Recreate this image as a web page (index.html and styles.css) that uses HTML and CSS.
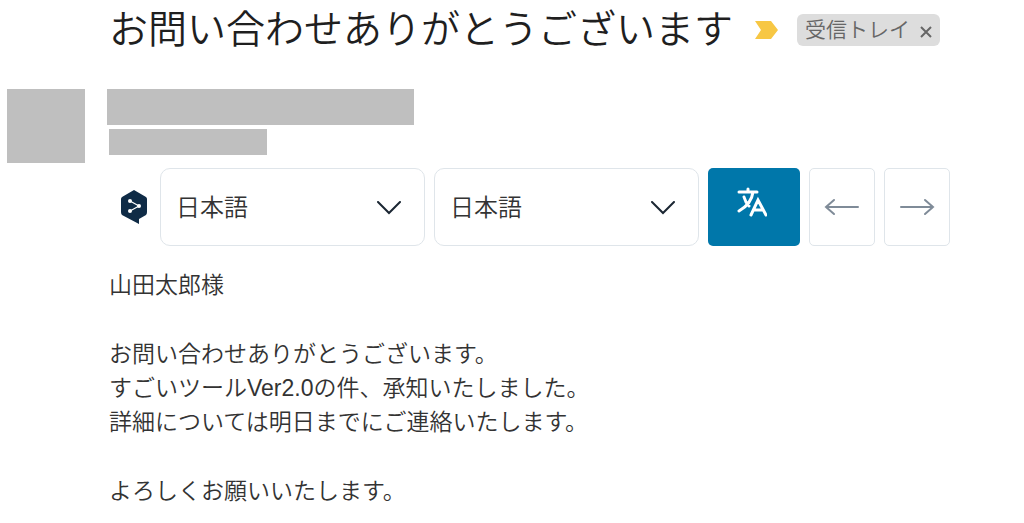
FILE: index.html
```
<!DOCTYPE html>
<html lang="ja">
	<head>
		<meta charset="utf-8">
		<title>お問い合わせありがとうございます</title>
		<link rel="stylesheet" href="styles.css">
	</head>
	<body>
		<header class="subject">
			<h1>お問い合わせありがとうございます</h1>
			<svg class="important" viewBox="0 0 24 20"><path d="M0 1H16L23 10L16 19H0L6 10Z" fill="#f7c744"/></svg>
			<span class="label">受信トレイ <button type="button" aria-label="ラベルを削除"><svg viewBox="0 0 12 12"><path d="M1 1L11 11M11 1L1 11"/></svg></button></span>
		</header>

		<main class="message">
			<div class="avatar"></div>
			<div class="content">
				<div class="sender"></div>
				<div class="recipient"></div>

				<div class="translator">
					<svg class="logo" viewBox="0 0 26 34">
						<path d="M13 0L25 7Q26 8 26 9V22Q26 24 25 25L18 29V34L1 25Q0 24 0 22V9Q0 8 1 7Z" fill="#0f2b46"/>
						<path d="M9 11L18 16L9 21" fill="none" stroke="#fff" stroke-width="1.200"/>
						<circle cx="9" cy="11" r="2" fill="#fff"/>
						<circle cx="18" cy="16" r="2" fill="#fff"/>
						<circle cx="9" cy="21" r="2" fill="#fff"/>
					</svg>
					<div class="language">
						<select aria-label="翻訳元の言語"><option>日本語</option></select>
						<svg viewBox="0 0 24 14"><path d="M1 1L12 12L23 1"/></svg>
					</div>
					<div class="language">
						<select aria-label="翻訳先の言語"><option>日本語</option></select>
						<svg viewBox="0 0 24 14"><path d="M1 1L12 12L23 1"/></svg>
					</div>
					<button type="button" class="translate" aria-label="翻訳">
						<svg viewBox="0 0 30 30"><path d="M2 5H20M11 2V5M16 5C15 13 9 20 2 24M7 10C8 14 9 16 12 19M14 28L21 13L29 28M17 23H26"/></svg>
					</button>
					<button type="button" class="arrow" aria-label="戻る">
						<svg viewBox="0 0 36 18"><path d="M34 9H2M10 2L2 9L10 16"/></svg>
					</button>
					<button type="button" class="arrow" aria-label="進む">
						<svg viewBox="0 0 36 18"><path d="M2 9H34M26 2L34 9L26 16"/></svg>
					</button>
				</div>

				<div class="body">
					<p>山田太郎様</p>
					<p>お問い合わせありがとうございます。<br>すごいツールVer2.0の件、承知いたしました。<br>詳細については明日までにご連絡いたします。</p>
					<p>よろしくお願いいたします。</p>
				</div>
			</div>
		</main>
	</body>
</html>
```
FILE: styles.css
```
* {
	box-sizing: border-box;
}
body {
	margin: 0;
	background: #fff;
	color: #333;
	font-family: "Liberation Sans", "Noto Sans CJK JP", sans-serif;
	font-weight: 350;
}
svg {
	display: block;
	flex: none;
}
button {
	padding: 0;
	cursor: pointer;
}
.subject {
	display: flex;
	align-items: center;
	height: 60px;
	padding-left: 109px;
}
.subject h1 {
	margin: 0;
	color: #1f1f1f;
	font-size: 39px;
	font-weight: 350;
	line-height: 56px;
	white-space: nowrap;
}
.important {
	width: 24px;
	height: 20px;
	margin: 0 18px 0 22px;
}
.label {
	display: flex;
	align-items: center;
	gap: 10px;
	height: 32px;
	padding: 0 8px;
	border-radius: 6px;
	background: #ddd;
	color: #666;
	font-size: 21px;
	line-height: 32px;
	white-space: nowrap;
}
.label button {
	border: 0;
	background: none;
}
.label svg {
	width: 12px;
	height: 12px;
	margin-top: 4px;
	fill: none;
	stroke: #666;
	stroke-width: 2;
}
.message {
	display: flex;
	gap: 22px;
	padding: 29px 74px 0 7px;
}
.avatar {
	flex: none;
	width: 78px;
	height: 74px;
	background: #bfbfbf;
}
.content {
	flex: 1;
}
.sender {
	width: 307px;
	height: 36px;
	background: #bfbfbf;
}
.recipient {
	width: 158px;
	height: 26px;
	margin: 4px 2px 13px;
	background: #bfbfbf;
}
.translator {
	display: flex;
	align-items: center;
	gap: 9px;
	height: 78px;
}
.logo {
	width: 26px;
	height: 34px;
	margin: 0 4px 0 14px;
}
.language {
	position: relative;
	flex: 1;
	height: 78px;
}
.language select {
	width: 100%;
	height: 100%;
	padding: 0 15px;
	border: 1px solid #dfe5ea;
	border-radius: 10px;
	background: #fff;
	color: #333;
	font-family: inherit;
	font-size: 24px;
	font-weight: inherit;
	appearance: none;
}
.language svg {
	position: absolute;
	top: 33px;
	right: 24px;
	width: 24px;
	height: 14px;
	fill: none;
	stroke: #1b2733;
	stroke-width: 2;
	stroke-linecap: round;
	pointer-events: none;
}
.translate {
	display: flex;
	justify-content: center;
	width: 92px;
	height: 78px;
	padding: 19px 4px 0 0;
	border: 0;
	border-radius: 5px;
	background: #0077aa;
}
.translate svg {
	width: 30px;
	height: 30px;
	fill: none;
	stroke: #fff;
	stroke-width: 3;
	stroke-linecap: round;
}
.arrow {
	display: flex;
	align-items: center;
	justify-content: center;
	width: 66px;
	height: 78px;
	border: 1px solid #dfe5ea;
	border-radius: 5px;
	background: #fff;
}
.arrow svg {
	width: 36px;
	height: 18px;
	fill: none;
	stroke: #7f8b98;
	stroke-width: 2;
	stroke-linecap: round;
}
.body {
	padding: 22px 0 0 2px;
	font-size: 23px;
	line-height: 34px;
}
.body p {
	margin: 0 0 35px;
}
.body p:last-child {
	margin: 0;
}
```
